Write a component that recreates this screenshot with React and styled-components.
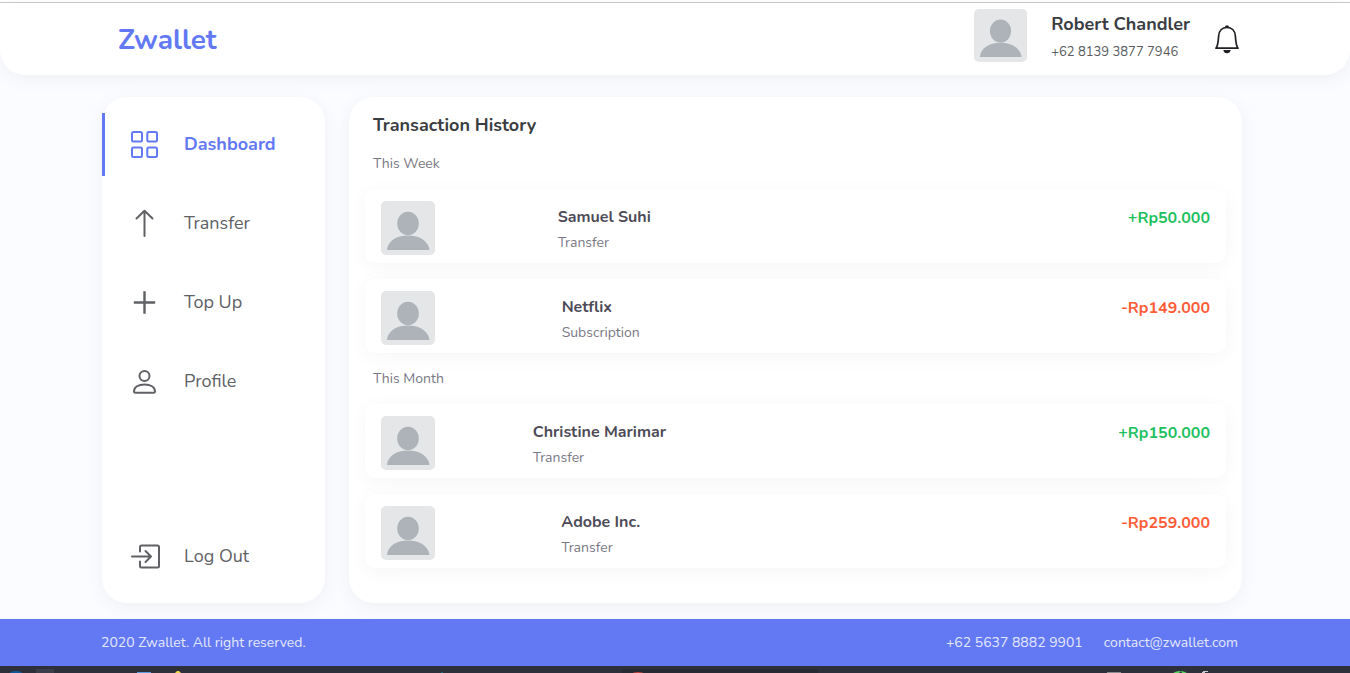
import React from "react";
import styled, { createGlobalStyle } from "styled-components";

const GlobalStyle = createGlobalStyle`
  * { box-sizing: border-box; }
  body {
    margin: 0;
    background: #fafcff;
    font-family: Nunito, Lato, "Open Sans", sans-serif;
    color: #3a3d42;
  }
  h1, h2, h3, p, ul { margin: 0; padding: 0; }
  ul { list-style: none; }
  a { color: inherit; text-decoration: none; }
`;

const Page = styled.div`
  display: flex;
  flex-direction: column;
  min-height: 100vh;
`;

const TopEdge = styled.div`
  height: 3px;
  background: #fff;
  border-bottom: 1px solid #c9c9cb;
`;

const Header = styled.header`
  display: flex;
  align-items: center;
  justify-content: space-between;
  height: 72px;
  padding: 0 110px 0 118px;
  background: #fff;
  border-radius: 0 0 25px 25px;
  box-shadow: 0 4px 20px rgba(0, 0, 0, 0.05);
`;

const Brand = styled.a`
  padding-top: 2px;
  font-size: 28px;
  line-height: 40px;
  font-weight: 700;
  color: #6379f4;
`;

const User = styled.div`
  display: flex;
  align-items: center;
  gap: 24px;
  padding-bottom: 8px;
`;

const UserText = styled.div`
  padding-top: 6px;
`;

const UserName = styled.h2`
  font-size: 18px;
  line-height: 28px;
  font-weight: 700;
`;

const UserPhone = styled.p`
  font-size: 13px;
  line-height: 28px;
  color: #5a5c61;
`;

const BellButton = styled.button`
  display: flex;
  padding: 8px 0 0;
  border: 0;
  background: none;
  cursor: pointer;
`;

const Content = styled.div`
  flex: 1;
  display: flex;
  gap: 24px;
  padding: 22px 108px 16px 102px;
`;

const Panel = styled.div`
  background: #fff;
  border-radius: 25px;
  box-shadow: 0 4px 20px rgba(0, 0, 0, 0.05);
`;

const Sidebar = styled(Panel).attrs({ as: "nav" })`
  flex: 0 0 223px;
  display: flex;
  flex-direction: column;
  gap: 16px;
  padding: 16px 0 15px;
`;

const NavItem = styled.a`
  display: flex;
  align-items: center;
  gap: 22px;
  height: 63px;
  padding-left: ${(p) => (p.$active ? "25px" : "28px")};
  border-left: ${(p) => (p.$active ? "3px solid #6379f4" : "0")};
  margin-top: ${(p) => (p.$last ? "auto" : "0")};
  font-size: 18px;
  line-height: 25px;
  font-weight: ${(p) => (p.$active ? 700 : 400)};
  color: ${(p) => (p.$active ? "#6379f4" : "#606165")};
`;

const History = styled(Panel).attrs({ as: "main" })`
  flex: 1;
  padding: 15px 16px 34px;
`;

const Title = styled.h1`
  padding-left: 8px;
  font-size: 18px;
  line-height: 26px;
  font-weight: 700;
`;

const Group = styled.section`
  padding-top: 15px;
`;

const GroupTitle = styled.h2`
  padding-left: 8px;
  font-size: 14px;
  line-height: 22px;
  font-weight: 400;
  color: #7a7886;
`;

const List = styled.ul`
  display: flex;
  flex-direction: column;
  gap: 16px;
  padding-top: 14px;
`;

const Row = styled.li`
  display: flex;
  height: 74px;
  padding: 12px 16px 0;
  background: #fff;
  border-radius: 10px;
  box-shadow: 0 4px 20px rgba(0, 0, 0, 0.04);
`;

const Details = styled.div`
  flex: 1;
  display: flex;
  justify-content: center;
  padding-left: 2px;
`;

const PartyName = styled.h3`
  padding-top: 4px;
  font-size: 16px;
  line-height: 24px;
  font-weight: 700;
  color: #4d4b57;
`;

const Kind = styled.p`
  font-size: 14px;
  line-height: 28px;
  color: #7a7886;
`;

const Amount = styled.p`
  margin-left: 43%;
  padding-top: 4px;
  font-size: 16px;
  line-height: 26px;
  font-weight: 700;
  color: ${(p) => (p.$income ? "#1ec15f" : "#ff5b37")};
`;

const Footer = styled.footer`
  display: flex;
  align-items: center;
  justify-content: space-between;
  height: 47px;
  padding: 0 112px 0 101px;
  background: #6379f4;
  color: #e5e8fd;
  font-size: 14px;
  line-height: 20px;
`;

const Contacts = styled.div`
  display: flex;
  gap: 21px;
`;

const Taskbar = styled.div`
  height: 7px;
  background: #2d303b;
  display: flex;
  padding: 0 142px 0 8px;
  overflow: hidden;
`;

const TaskWindow = styled.div`
  width: 196px;
  height: 4px;
  margin: 3px auto 0 174px;
  padding-left: 8px;
  background: #272a33;
`;

const Avatar = ({ size = 54 }) => (
  <svg width={size} height={size} viewBox="0 0 54 54" role="img" aria-label="Avatar">
    <rect width="54" height="54" rx="5" fill="#e4e6e8" />
    <ellipse cx="27" cy="22.5" rx="10.8" ry="11.7" fill="#adb3b8" />
    <path d="M6 49C6.500 40.500 15 34.500 27 34.500S47.500 40.500 48.500 49Z" fill="#adb3b8" />
  </svg>
);

const Bell = () => (
  <svg width="26" height="30" viewBox="0 0 26 30" fill="none">
    <path
      d="M2 24.200C4.300 21 4.300 16 4.600 12C5 6.500 8.500 3.300 13 3.300S21 6.500 21.400 12C21.700 16 21.700 21 24 24.200Z"
      stroke="#1f2024" strokeWidth="1.700" strokeLinejoin="round"
    />
    <path d="M11 3.200A2 2 0 0 1 15 3.200Z M9.300 26H16.700C16.400 28 15 29.300 13 29.300S9.600 28 9.300 26Z" fill="#1f2024" />
  </svg>
);

const Icon = ({ children }) => (
  <svg width="32" height="32" viewBox="0 0 32 32" fill="none" stroke="currentColor"
    strokeWidth="2" strokeLinecap="round" strokeLinejoin="round" aria-hidden="true">
    {children}
  </svg>
);

const icons = {
  grid: (
    <>
      <rect x="2" y="3" width="10" height="9.500" rx="1.500" />
      <rect x="17.300" y="3" width="9.700" height="9.500" rx="1.500" />
      <rect x="2" y="18.500" width="10" height="9.500" rx="1.500" />
      <rect x="17.300" y="18.500" width="9.700" height="9.500" rx="1.500" />
    </>
  ),
  up: <path d="M14.500 28V3M6.500 10.500L14.500 2.800L22.500 10.500" />,
  plus: <path d="M14.500 5.500V25.500M5 15.500H24" strokeWidth="2.400" strokeLinecap="square" />,
  user: (
    <>
      <circle cx="14.500" cy="10" r="5" />
      <path d="M4 25.500C4 21 8.500 18.500 14.500 18.500S25 21 25 25.500C25 26.300 24.500 26.800 23.700 26.800H5.300C4.500 26.800 4 26.300 4 25.500Z" />
    </>
  ),
  exit: <path d="M10 10.500V6Q10 4.500 11.500 4.500H27.500Q29 4.500 29 6V25Q29 26.500 27.500 26.500H11.500Q10 26.500 10 25V20.500M2 15.500H21M15.500 10L21 15.500L15.500 21" />,
};

const LaunchIcons = () => (
  <svg width="440" height="7" viewBox="8 0 440 7" aria-hidden="true">
    <ellipse cx="16" cy="10" rx="8" ry="5" fill="#12589c" />
    <rect x="36" y="3" width="18" height="4" fill="#3b3d4a" />
    <rect x="137" y="6" width="14" height="1" fill="#5b9be0" />
    <path d="M175 7L177 5H179L181 7Z" fill="#f0d848" />
    <rect x="441" y="6" width="2" height="1" fill="#1d6670" />
  </svg>
);

const WindowIcon = () => (
  <svg width="16" height="4" viewBox="0 0 16 4" display="block" aria-hidden="true">
    <ellipse cx="8" cy="5" rx="6" ry="2" fill="#c8473f" />
  </svg>
);

const TrayIcons = () => (
  <svg width="104" height="7" viewBox="1104 0 104 7" aria-hidden="true">
    <rect x="1107" y="6" width="14" height="1" fill="#8b8c90" />
    <ellipse cx="1180" cy="8" rx="7" ry="3" fill="#55d25f" />
    <path d="M1181 5L1179 7H1182Z" fill="#2d303b" />
    <path d="M1203 5H1208V6H1205V7H1202V6H1203Z" fill="#c9cacd" />
  </svg>
);

const navItems = [
  { label: "Dashboard", icon: "grid", active: true },
  { label: "Transfer", icon: "up" },
  { label: "Top Up", icon: "plus" },
  { label: "Profile", icon: "user" },
  { label: "Log Out", icon: "exit", last: true },
];

const groups = [
  {
    title: "This Week",
    rows: [
      { name: "Samuel Suhi", kind: "Transfer", amount: "+Rp50.000", income: true },
      { name: "Netflix", kind: "Subscription", amount: "-Rp149.000" },
    ],
  },
  {
    title: "This Month",
    rows: [
      { name: "Christine Marimar", kind: "Transfer", amount: "+Rp150.000", income: true },
      { name: "Adobe Inc.", kind: "Transfer", amount: "-Rp259.000" },
    ],
  },
];

export default function App() {
  return (
    <Page>
      <GlobalStyle />
      <TopEdge />
      <Header>
        <Brand href="#">Zwallet</Brand>
        <User>
          <Avatar size={53} />
          <UserText>
            <UserName>Robert Chandler</UserName>
            <UserPhone>+62 8139 3877 7946</UserPhone>
          </UserText>
          <BellButton type="button" aria-label="Notifications"><Bell /></BellButton>
        </User>
      </Header>
      <Content>
        <Sidebar>
          {navItems.map((n) => (
            <NavItem key={n.label} href="#" $active={n.active} $last={n.last}>
              <Icon>{icons[n.icon]}</Icon>
              {n.label}
            </NavItem>
          ))}
        </Sidebar>
        <History>
          <Title>Transaction History</Title>
          {groups.map((g) => (
            <Group key={g.title}>
              <GroupTitle>{g.title}</GroupTitle>
              <List>
                {g.rows.map((r) => (
                  <Row key={r.name}>
                    <Avatar />
                    <Details>
                      <div>
                        <PartyName>{r.name}</PartyName>
                        <Kind>{r.kind}</Kind>
                      </div>
                    </Details>
                    <Amount $income={r.income}>{r.amount}</Amount>
                  </Row>
                ))}
              </List>
            </Group>
          ))}
        </History>
      </Content>
      <Footer>
        <p>2020 Zwallet. All right reserved.</p>
        <Contacts>
          <a href="tel:+62563788829901">+62 5637 8882 9901</a>
          <a href="mailto:contact@zwallet.com">contact@zwallet.com</a>
        </Contacts>
      </Footer>
      <Taskbar>
        <LaunchIcons />
        <TaskWindow><WindowIcon /></TaskWindow>
        <TrayIcons />
      </Taskbar>
    </Page>
  );
}
